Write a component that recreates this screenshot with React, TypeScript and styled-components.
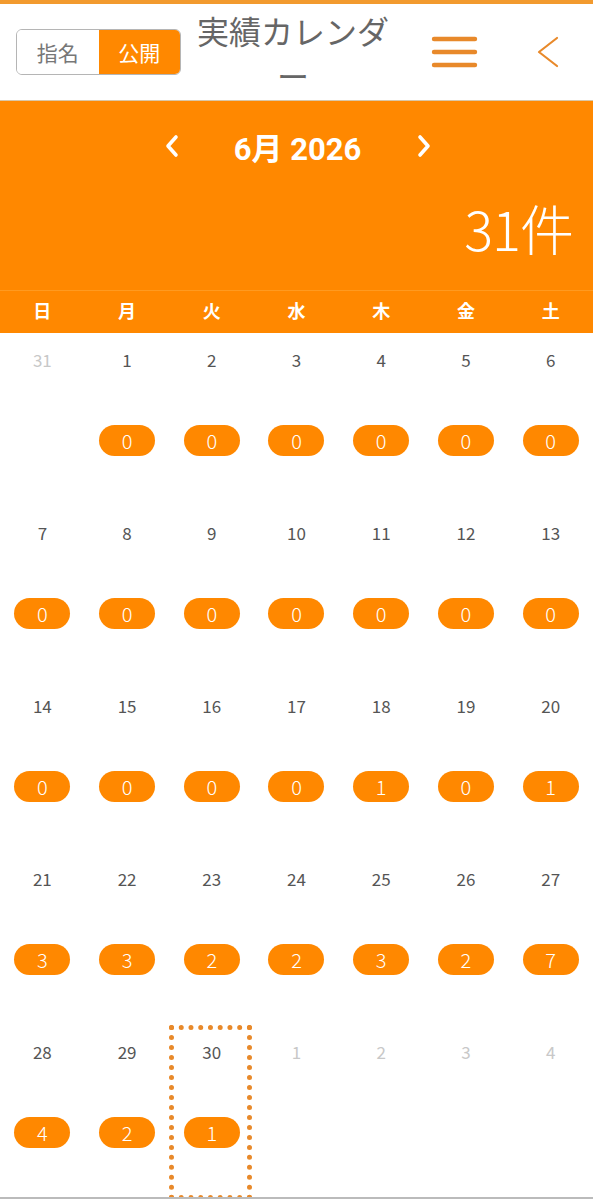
import styled, { createGlobalStyle } from 'styled-components';

const ORANGE = '#ff8800';
const ICON = '#e8892a';

const GlobalStyle = createGlobalStyle`
  html, body {
    margin: 0;
    padding: 0;
    background: #fff;
  }
  body {
    font-family: "Noto Sans CJK JP", "Noto Sans", sans-serif;
  }
`;

const Page = styled.div`
  width: 593px;
  height: 1199px;
  overflow: hidden;
  border-top: 4px solid #f29a2e;
  box-sizing: border-box;
  border-bottom: 2px solid #bbb;
`;

const Header = styled.header`
  height: 96px;
  display: flex;
  align-items: center;
  padding: 0 16px;
  border-bottom: 1px solid #d9c7a8;
`;

const Toggle = styled.div`
  display: flex;
  width: 165px;
  height: 46px;
  border: 1px solid #b5b5b5;
  border-radius: 6px;
  overflow: hidden;
  box-sizing: border-box;
`;

const ToggleItem = styled.div<{ $active?: boolean }>`
  flex: 1;
  display: flex;
  align-items: center;
  justify-content: center;
  font-size: 21px;
  color: ${(p) => (p.$active ? '#fff' : '#777')};
  background: ${(p) => (p.$active ? ORANGE : '#fff')};
`;

const Title = styled.h1`
  width: 200px;
  margin: 2px 0 0 12px;
  font-size: 32px;
  font-weight: 400;
  line-height: 45px;
  color: #666;
  text-align: center;
`;

const IconButton = styled.div`
  display: flex;
  align-items: center;
  justify-content: center;
`;

const Menu = styled(IconButton)`
  margin-left: 38px;
  width: 48px;
`;

const Back = styled(IconButton)`
  margin-left: 56px;
  width: 26px;
`;

const Banner = styled.section`
  background: ${ORANGE};
  height: 189px;
  display: flex;
  flex-direction: column;
`;

const MonthNav = styled.div`
  display: flex;
  align-items: center;
  justify-content: center;
  height: 90px;
  padding-left: 2px;
`;

const MonthLabel = styled.div`
  width: 232px;
  text-align: center;
  font-family: "Roboto", "Noto Sans CJK JP", sans-serif;
  font-weight: 700;
  font-size: 31px;
  color: #fff;
`;

const Total = styled.div`
  text-align: right;
  padding-right: 20px;
  margin-top: 10px;
  font-size: 54px;
  font-weight: 300;
  line-height: 1;
  color: #fff;
  letter-spacing: -1px;
`;

const WeekRow = styled.div`
  display: grid;
  grid-template-columns: repeat(7, 1fr);
  height: 43px;
  align-items: center;
  background: ${ORANGE};
  border-top: 1px solid #ff9a20;
  box-sizing: border-box;
  padding-bottom: 4px;
`;

const WeekDay = styled.div`
  text-align: center;
  font-size: 18px;
  font-weight: 700;
  color: #fff;
`;

const Grid = styled.div`
  display: grid;
  grid-template-columns: repeat(7, 1fr);
  grid-auto-rows: 173px;
`;

const Cell = styled.div<{ $today?: boolean }>`
  position: relative;
  display: flex;
  flex-direction: column;
  align-items: center;
  &::after {
    content: '';
    display: ${(p) => (p.$today ? 'block' : 'none')};
    position: absolute;
    top: 0;
    left: 0;
    right: 2px;
    bottom: -2px;
    border: 5px dotted ${ICON};
  }
`;

const DayNum = styled.div<{ $muted?: boolean }>`
  margin-top: 15px;
  height: 24px;
  line-height: 24px;
  font-size: 17px;
  color: ${(p) => (p.$muted ? '#c8c8c8' : '#555')};
`;

const Pill = styled.div`
  margin-top: 53px;
  width: 56px;
  height: 31px;
  border-radius: 16px;
  background: ${ORANGE};
  color: #fff;
  font-size: 20px;
  font-weight: 300;
  display: flex;
  align-items: center;
  justify-content: center;
`;

type Day = { n: number; count?: number; muted?: boolean; today?: boolean };

const counts = [
  0, 0, 0, 0, 0, 0,
  0, 0, 0, 0, 0, 0, 0,
  0, 0, 0, 0, 1, 0, 1,
  3, 3, 2, 2, 3, 2, 7,
  4, 2, 1,
];

const days: Day[] = [
  { n: 31, muted: true },
  ...counts.map((c, i) => ({ n: i + 1, count: c, today: i + 1 === 30 })),
  { n: 1, muted: true },
  { n: 2, muted: true },
  { n: 3, muted: true },
  { n: 4, muted: true },
];

const weekdays = ['日', '月', '火', '水', '木', '金', '土'];

const Chevron = ({ dir }: { dir: 'left' | 'right' }) => (
  <svg width="20" height="26" viewBox="0 0 20 26">
    <path
      d={dir === 'left' ? 'M14 4 L6 13 L14 22' : 'M6 4 L14 13 L6 22'}
      fill="none"
      stroke="#fff"
      strokeWidth="3.6"
      strokeLinecap="round"
      strokeLinejoin="round"
    />
  </svg>
);

export default function App() {
  return (
    <>
      <GlobalStyle />
      <Page>
        <Header>
          <Toggle>
            <ToggleItem>指名</ToggleItem>
            <ToggleItem $active>公開</ToggleItem>
          </Toggle>
          <Title>実績カレンダー</Title>
          <Menu>
            <svg width="48" height="34" viewBox="0 0 48 34">
              <g stroke={ICON} strokeWidth="4.4" strokeLinecap="round">
                <line x1="3" y1="4" x2="44" y2="4" />
                <line x1="3" y1="17" x2="44" y2="17" />
                <line x1="3" y1="30" x2="44" y2="30" />
              </g>
            </svg>
          </Menu>
          <Back>
            <svg width="26" height="32" viewBox="0 0 26 32">
              <path d="M22 2 L4 16 L22 30" fill="none" stroke={ICON} strokeWidth="2.2" strokeLinecap="round" strokeLinejoin="round" />
            </svg>
          </Back>
        </Header>
        <Banner>
          <MonthNav>
            <Chevron dir="left" />
            <MonthLabel>6月 2026</MonthLabel>
            <Chevron dir="right" />
          </MonthNav>
          <Total>31件</Total>
        </Banner>
        <WeekRow>
          {weekdays.map((w) => (
            <WeekDay key={w}>{w}</WeekDay>
          ))}
        </WeekRow>
        <Grid>
          {days.map((d, i) => (
            <Cell key={i} $today={d.today}>
              <DayNum $muted={d.muted}>{d.n}</DayNum>
              {d.count !== undefined && <Pill>{d.count}</Pill>}
            </Cell>
          ))}
        </Grid>
      </Page>
    </>
  );
}
